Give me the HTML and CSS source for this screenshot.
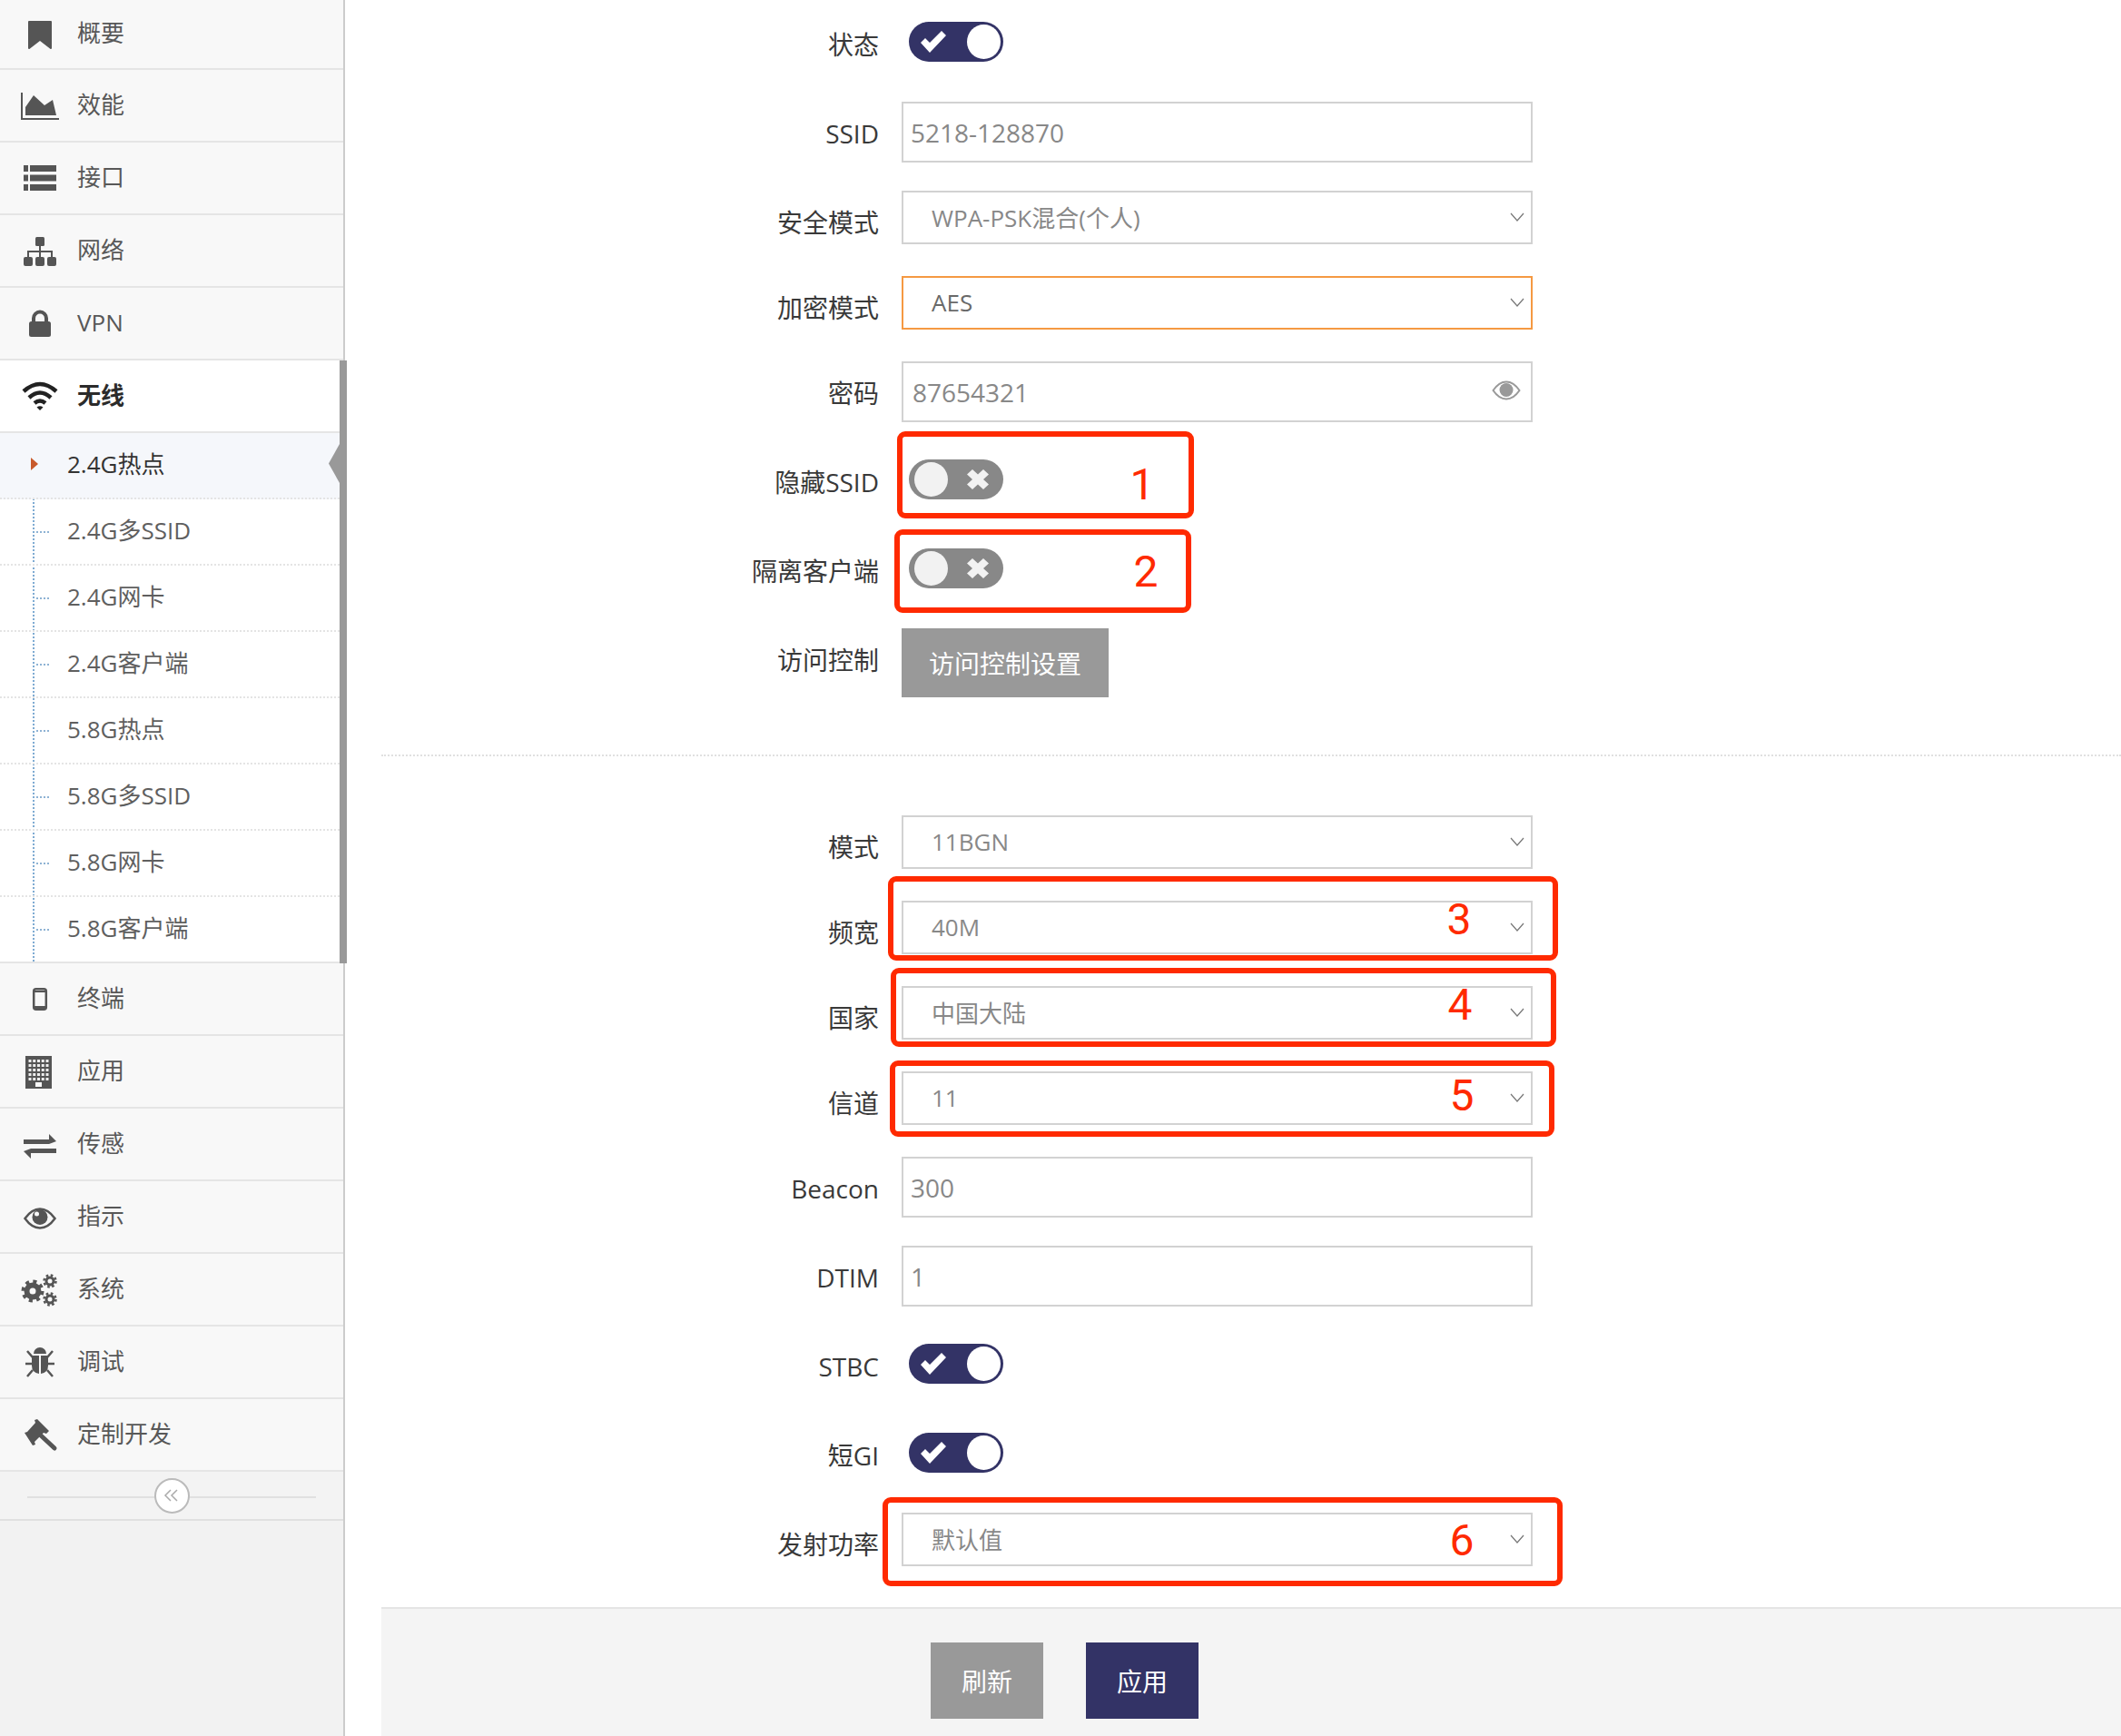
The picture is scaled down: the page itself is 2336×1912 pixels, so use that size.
FILE: index.html
```html
<!doctype html>
<html lang="en">
	<head>
		<title>无线</title>
		<meta charset="utf-8" />
		<link rel="stylesheet" href="styles.css">
	</head>

	<body>

		<div id="sidebar">
			<ul class="nav">
				<li class="nav-item first">
					<svg class="icon" viewBox="0 0 44 40"><path d="M10 6h24a1 1 0 0 1 1 1v29a1 1 0 0 1-1.700.700L22 28l-11.300 8.700A1 1 0 0 1 9 36V7a1 1 0 0 1 1-1z"/></svg>
					<span>概要</span>
				</li>
				<li class="nav-item">
					<svg class="icon" viewBox="0 0 44 40"><path d="M6 31V22L15 9l12 11 9-6 4 17z"/><path class="line" stroke-width="2" d="M2 6v29h41"/></svg>
					<span>效能</span>
				</li>
				<li class="nav-item">
					<svg class="icon" viewBox="0 0 44 40"><path d="M4 6h5v7H4zM11 6h29v7H11zM4 16.500h5v7H4zM11 16.500h29v7H11zM4 27h5v7H4zM11 27h29v7H11z"/></svg>
					<span>接口</span>
				</li>
				<li class="nav-item">
					<svg class="icon" viewBox="0 0 44 40"><rect x="17" y="5" width="10" height="10" rx="1.500"/><rect x="4" y="27" width="10" height="10" rx="2"/><rect x="17" y="27" width="10" height="10" rx="2"/><rect x="30" y="27" width="10" height="10" rx="2"/><path class="line" stroke-width="2" d="M22 15v12M9 27v-6h26v6"/></svg>
					<span>网络</span>
				</li>
				<li class="nav-item">
					<svg class="icon" viewBox="0 0 44 40"><path class="line" stroke-width="4" d="M15 19v-4.500a7 7 0 0 1 14 0V19"/><rect x="10" y="18" width="24" height="17" rx="2.500"/></svg>
					<span>VPN</span>
				</li>
				<li class="nav-item open">
					<svg class="icon" viewBox="0 0 44 40"><path class="line" stroke-width="4.500" d="M4 15Q22-1 40 15M10 22Q22 11 34 22M16 28q6-5 12 0"/><path d="M18.500 32.500q3.500-2.500 7 0L22 36z"/></svg>
					<span>无线</span>
				</li>
				<li class="sub">
					<ul class="submenu">
						<li class="active">2.4G热点</li>
						<li>2.4G多SSID</li>
						<li>2.4G网卡</li>
						<li>2.4G客户端</li>
						<li>5.8G热点</li>
						<li>5.8G多SSID</li>
						<li>5.8G网卡</li>
						<li>5.8G客户端</li>
					</ul>
				</li>
				<li class="nav-item">
					<svg class="icon" viewBox="0 0 44 40"><rect class="line" stroke-width="2.500" x="15.200" y="9.200" width="13.600" height="22.600" rx="2.500"/><path d="M15 11h14v2H15zM15 28h14v4H15z"/></svg>
					<span>终端</span>
				</li>
				<li class="nav-item">
					<svg class="icon" viewBox="0 0 44 40"><rect x="6" y="3" width="29" height="36"/><path class="dots" d="M9.500 8.500h22M9.500 13.500h22M9.500 18.500h22M9.500 23.500h22M9.500 28.500h22"/><path class="hole" d="M17 32h7v5h-7z"/></svg>
					<span>应用</span>
				</li>
				<li class="nav-item">
					<svg class="icon" viewBox="0 0 44 40"><path d="M4 15h28V9l8 8-8 3H4zM40 25v5H12v6l-8-8 8-3z"/></svg>
					<span>传感</span>
				</li>
				<li class="nav-item">
					<svg class="icon" viewBox="0 0 44 40"><path class="line" stroke-width="2.500" d="M5.500 22Q13 11.500 22 11.500T38.500 22Q31 32.500 22 32.500T5.500 22z"/><circle cx="22" cy="20.500" r="8.500"/><circle class="hole" cx="18.500" cy="17" r="2.500"/></svg>
					<span>指示</span>
				</li>
				<li class="nav-item">
					<svg class="icon" viewBox="0 0 44 40"><circle class="line" stroke-width="6" cx="14" cy="22" r="6.500"/><circle class="line teeth" stroke-width="4" cx="14" cy="22" r="10.500"/><circle class="line" stroke-width="3" cx="33" cy="11" r="4"/><circle class="line teeth-small" stroke-width="2.500" cx="33" cy="11" r="6.500"/><circle class="line" stroke-width="3" cx="33" cy="31" r="4"/><circle class="line teeth-small" stroke-width="2.500" cx="33" cy="31" r="6.500"/></svg>
					<span>系统</span>
				</li>
				<li class="nav-item">
					<svg class="icon" viewBox="0 0 44 40"><path d="M15 11a7 7 0 0 1 14 0zM13 13h8v20q-8-1-8-9zM23 13h8v11q0 8-8 9z"/><path class="line" stroke-width="2.500" d="M8 8l6 7M36 8l-6 7M6 22h8M38 22h-8M8 36l6-7M36 36l-6-7"/></svg>
					<span>调试</span>
				</li>
				<li class="nav-item">
					<svg class="icon" viewBox="0 0 44 40"><path d="M5 18l3-1 9-10-1-3 3-1 13 13-3 3-3-1-10 10 1 3-3 1z" /><path class="line thick" d="M23 21l15 14"/></svg>
					<span>定制开发</span>
				</li>
			</ul>
			<div class="collapse">
				<div class="collapse-btn">
					<svg viewBox="0 0 20 20"><path d="M9 4l-6 6 6 6M16 4l-6 6 6 6"/></svg>
				</div>
			</div>
		</div>

		<div id="main">
			<div class="form">
				<div class="row toggle-row">
					<label>状态</label>
					<div class="toggle on">
						<svg viewBox="0 0 30 24"><path d="M1 13l5-5 5 5L24 0l5 5-18 19z"/></svg>
						<i></i>
					</div>
				</div>
				<div class="row input-row">
					<label>SSID</label>
					<div class="input">5218-128870</div>
				</div>
				<div class="row select-row">
					<label>安全模式</label>
					<div class="select"><span>WPA-PSK混合(个人)</span><svg viewBox="0 0 16 10"><path d="M1 1l7 8 7-8"/></svg></div>
				</div>
				<div class="row select-row">
					<label>加密模式</label>
					<div class="select focus"><span>AES</span><svg viewBox="0 0 16 10"><path d="M1 1l7 8 7-8"/></svg></div>
				</div>
				<div class="row input-row">
					<label>密码</label>
					<div class="input password">
						<span>87654321</span>
						<svg viewBox="0 0 32 22"><path class="lid" d="M1.500 11Q8 1.500 16 1.500T30.500 11Q24 20.500 16 20.500T1.500 11z"/><circle cx="16" cy="10.500" r="7.500"/></svg>
					</div>
				</div>
				<div class="row toggle-row">
					<label>隐藏SSID</label>
					<div class="toggle off">
						<i></i>
						<svg viewBox="2 2 20 20" preserveAspectRatio="none"><path d="M2 7l5-5 5 5 5-5 5 5-5 5 5 5-5 5-5-5-5 5-5-5 5-5z"/></svg>
					</div>
				</div>
				<div class="row toggle-row">
					<label>隔离客户端</label>
					<div class="toggle off">
						<i></i>
						<svg viewBox="2 2 20 20" preserveAspectRatio="none"><path d="M2 7l5-5 5 5 5-5 5 5-5 5 5 5-5 5-5-5-5 5-5-5 5-5z"/></svg>
					</div>
				</div>
				<div class="row button-row">
					<label>访问控制</label>
					<button class="btn gray wide">访问控制设置</button>
				</div>
			</div>

			<div class="divider"></div>

			<div class="form lower">
				<div class="row select-row">
					<label>模式</label>
					<div class="select"><span>11BGN</span><svg viewBox="0 0 16 10"><path d="M1 1l7 8 7-8"/></svg></div>
				</div>
				<div class="row select-row">
					<label>频宽</label>
					<div class="select"><span>40M</span><svg viewBox="0 0 16 10"><path d="M1 1l7 8 7-8"/></svg></div>
				</div>
				<div class="row select-row">
					<label>国家</label>
					<div class="select"><span>中国大陆</span><svg viewBox="0 0 16 10"><path d="M1 1l7 8 7-8"/></svg></div>
				</div>
				<div class="row select-row">
					<label>信道</label>
					<div class="select"><span>11</span><svg viewBox="0 0 16 10"><path d="M1 1l7 8 7-8"/></svg></div>
				</div>
				<div class="row input-row">
					<label>Beacon</label>
					<div class="input">300</div>
				</div>
				<div class="row input-row">
					<label>DTIM</label>
					<div class="input">1</div>
				</div>
				<div class="row toggle-row">
					<label>STBC</label>
					<div class="toggle on">
						<svg viewBox="0 0 30 24"><path d="M1 13l5-5 5 5L24 0l5 5-18 19z"/></svg>
						<i></i>
					</div>
				</div>
				<div class="row toggle-row">
					<label>短GI</label>
					<div class="toggle on">
						<svg viewBox="0 0 30 24"><path d="M1 13l5-5 5 5L24 0l5 5-18 19z"/></svg>
						<i></i>
					</div>
				</div>
				<div class="row select-row last">
					<label>发射功率</label>
					<div class="select"><span>默认值</span><svg viewBox="0 0 16 10"><path d="M1 1l7 8 7-8"/></svg></div>
				</div>
			</div>

			<div class="footer">
				<button class="btn gray">刷新</button>
				<button class="btn navy">应用</button>
			</div>
		</div>

		<!-- red notes drawn over the screenshot -->
		<div class="mark mark-1"></div><div class="num num-1">1</div>
		<div class="mark mark-2"></div><div class="num num-2">2</div>
		<div class="mark mark-3"></div><div class="num num-3">3</div>
		<div class="mark mark-4"></div><div class="num num-4">4</div>
		<div class="mark mark-5"></div><div class="num num-5">5</div>
		<div class="mark mark-6"></div><div class="num num-6">6</div>

	</body>
</html>
```

FILE: styles.css
```css
html, body {
	margin: 0;
	padding: 0;
}

body {
	position: relative;
	display: flex;
	width: 2336px;
	height: 1912px;
	overflow: hidden;
	background: #fff;
	font-family: "Open Sans", "Noto Sans CJK SC", sans-serif;
	font-size: 26px;
	color: #333;
}

/* sidebar */
#sidebar {
	flex: none;
	box-sizing: border-box;
	width: 380px;
	border-right: 2px solid #ccc;
	background: #f2f2f2;
}

.nav, .submenu {
	list-style: none;
	margin: 0;
	padding: 0;
}

.nav-item {
	box-sizing: border-box;
	display: flex;
	align-items: center;
	gap: 19px;
	height: 80px;
	padding-left: 22px;
	border-bottom: 2px solid #e5e5e5;
	background: #f8f8f8;
	color: #585858;
	line-height: 40px;
}

.nav-item span {
	margin-top: -3px;
}

.nav-item.first {
	height: 77px;
}

.nav-item.first .icon {
	margin-top: -2px;
}

.nav-item.first span {
	margin-top: -4px;
}

.icon {
	flex: none;
	width: 44px;
	height: 40px;
	fill: #555;
	overflow: visible;
}

.icon .line {
	fill: none;
	stroke: #555;
}

.icon .thick {
	stroke-width: 5px;
	stroke-linecap: round;
}

.icon .dots {
	fill: none;
	stroke: #eee;
	stroke-width: 3px;
	stroke-dasharray: 3 1.750;
}

.icon .hole {
	fill: #f8f8f8;
}

.icon .teeth {
	stroke-dasharray: 4 4.250;
}

.icon .teeth-small {
	stroke-dasharray: 2.600 2.500;
}

.nav-item.open {
	position: relative;
	background: #fff;
	color: #2b2b2b;
	font-weight: 700;
}

.nav-item.open .icon {
	fill: #222;
}

.nav-item.open .line {
	stroke: #222;
}

/* grey bar beside the open group */
.nav-item.open::after {
	content: "";
	position: absolute;
	left: 374px;
	top: 0;
	width: 8px;
	height: 664px;
	background: #999;
	z-index: 2;
}

.submenu {
	position: relative;
	background: #fff;
	border-bottom: 2px solid #e5e5e5;
}

/* dotted tree line */
.submenu::before {
	content: "";
	position: absolute;
	left: 36px;
	top: 0;
	bottom: 0;
	border-left: 2px dotted #7fabd2;
}

.submenu li {
	position: relative;
	box-sizing: border-box;
	height: 73px;
	padding-left: 74px;
	border-bottom: 2px dotted #e4e4e4;
	color: #5f5f5f;
	line-height: 68px;
}

.submenu li:last-child {
	height: 71px;
	border-bottom: 0;
}

.submenu li::before {
	content: "";
	position: absolute;
	left: 40px;
	top: 35px;
	width: 14px;
	border-top: 2px dotted #8fb3d4;
}

.submenu li.active {
	background: #f5f7fb;
	color: #333;
}

.submenu li.active::before {
	left: 34px;
	top: 27px;
	width: 8px;
	height: 14px;
	border: 0;
	background: #c8592b;
	clip-path: polygon(0 0, 100% 50%, 0 100%);
	z-index: 1;
}

.submenu li.active::after {
	content: "";
	position: absolute;
	right: 4px;
	top: 12px;
	width: 12px;
	height: 43px;
	background: #999;
	clip-path: polygon(0 50%, 100% 0, 100% 100%);
}

.collapse {
	position: relative;
	box-sizing: border-box;
	display: flex;
	align-items: center;
	justify-content: center;
	height: 54px;
	border-bottom: 2px solid #e0e0e0;
	background: #f3f3f3;
}

.collapse::before {
	content: "";
	position: absolute;
	left: 30px;
	right: 30px;
	top: 27px;
	border-top: 2px solid #e0e0e0;
}

.collapse-btn {
	position: relative;
	box-sizing: border-box;
	display: flex;
	align-items: center;
	justify-content: center;
	width: 39px;
	height: 39px;
	border: 2px solid #bbb;
	border-radius: 50%;
	background: #fff;
}

.collapse-btn svg {
	width: 20px;
	height: 20px;
	fill: none;
	stroke: #aaa;
	stroke-width: 1.500;
}

/* form */
#main {
	flex: 1;
	margin-left: 40px;
	display: flex;
	flex-direction: column;
}

.form {
	padding-top: 14px;
}

.lower {
	padding-top: 65px;
}

.row {
	display: flex;
	align-items: flex-start;
}

.row label {
	flex: none;
	box-sizing: border-box;
	width: 548px;
	height: 40px;
	margin-right: 25px;
	padding-top: 15px;
	line-height: 40px;
	font-size: 28px;
	text-align: right;
	color: #393939;
}

.input-row {
	margin-bottom: 31px;
}

.select-row {
	margin-bottom: 35px;
}

.select-row.last {
	margin-bottom: 45px;
}

.toggle-row {
	margin-bottom: 44px;
}

.button-row {
	margin-bottom: 63px;
}

.input, .select {
	box-sizing: border-box;
	display: flex;
	align-items: center;
	justify-content: space-between;
	width: 695px;
	border: 2px solid #d2d2d2;
	background: #fff;
	color: #888;
}

.input {
	height: 67px;
	padding: 0 11px 0 8px;
	font-size: 28px;
}

.input.password span {
	padding-left: 2px;
}

.input svg {
	width: 32px;
	height: 22px;
	margin-top: -3px;
	fill: #999;
}

.input .lid {
	fill: none;
	stroke: #999;
	stroke-width: 2px;
}

.select {
	height: 59px;
	padding: 0 7px 2px 31px;
	font-size: 26px;
}

.select.focus {
	border-color: #f59942;
	color: #696969;
}

.select svg {
	width: 16px;
	height: 10px;
	fill: none;
	stroke: #777;
	stroke-width: 1.200;
}

.toggle {
	box-sizing: border-box;
	display: flex;
	align-items: center;
	justify-content: space-between;
	width: 104px;
	height: 44px;
	margin: 10px 0 0 8px;
	border-radius: 22px;
}

.toggle i {
	display: block;
	width: 37px;
	height: 38px;
	border-radius: 50%;
}

.toggle.on {
	padding: 0 3px 0 12px;
	background: #333366;
}

.toggle.on i {
	background: #fff;
}

.toggle.on svg {
	width: 30px;
	height: 24px;
	fill: #fff;
}

.toggle.off {
	padding: 0 16px 0 6px;
	background: #888;
}

.toggle.off i {
	background: #f2f2f2;
}

.toggle.off svg {
	width: 24px;
	height: 22px;
	fill: #f2f2f2;
}

.btn {
	border: 0;
	padding: 0;
	width: 124px;
	height: 84px;
	font-family: inherit;
	font-size: 28px;
	color: #fff;
}

.btn.wide {
	width: 228px;
	height: 76px;
}

.btn.gray {
	background: #999;
}

.btn.navy {
	background: #333366;
}

.divider {
	border-top: 2px dotted #e0e0e0;
}

.footer {
	flex: 1;
	display: flex;
	gap: 47px;
	padding: 37px 0 0 605px;
	border-top: 2px solid #e5e5e5;
	background: #f4f4f4;
}

/* annotations */
.mark {
	position: absolute;
	box-sizing: border-box;
	border: 6px solid #ff2a00;
	border-radius: 9px;
}

.mark-1 { left: 988px; top: 475px; width: 327px; height: 96px; }
.mark-2 { left: 985px; top: 583px; width: 327px; height: 92px; }
.mark-3 { left: 978px; top: 965px; width: 738px; height: 93px; }
.mark-4 { left: 981px; top: 1066px; width: 733px; height: 87px; }
.mark-5 { left: 980px; top: 1168px; width: 732px; height: 84px; }
.mark-6 { left: 972px; top: 1649px; width: 749px; height: 98px; }

.num {
	position: absolute;
	width: 30px;
	font-family: Roboto, "Liberation Sans", sans-serif;
	font-weight: 400;
	font-size: 48px;
	line-height: 48px;
	text-align: center;
	color: #ff2a00;
}

.num-1 { left: 1243px; top: 510px; }
.num-2 { left: 1247px; top: 606px; }
.num-3 { left: 1592px; top: 989px; }
.num-4 { left: 1593px; top: 1083px; }
.num-5 { left: 1595px; top: 1183px; }
.num-6 { left: 1595px; top: 1673px; }
```
